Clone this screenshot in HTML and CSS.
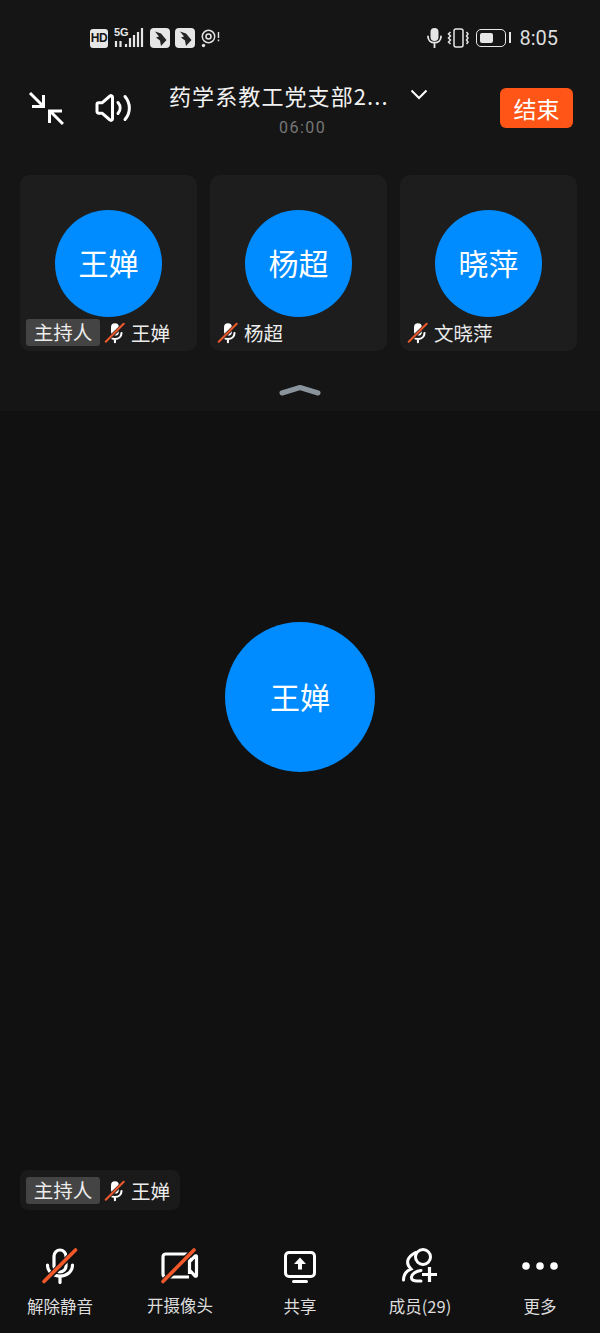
FILE: index.html
```html
<!DOCTYPE html>
<html lang="zh">

<head>
  <meta charset="utf-8">
  <title>会议</title>
  <link rel="stylesheet" href="styles.css">
</head>

<body>
  <svg class="defs" width="0" height="0">
    <symbol id="mutedMic" viewBox="0 0 24 24">
      <rect x="8" y="1.5" width="9" height="14" rx="4.5" fill="#fff" />
      <path d="M20 12.500c0 4.200-3.300 6.900-7.500 6.900-2 0-3.800-.6-5-1.700M12.500 19.500v3.500" fill="none" stroke="#fff" stroke-width="2.400" stroke-linecap="round" />
      <path d="M1.500 23 23 2" stroke="#1c1c1c" stroke-width="4" />
      <path d="M2 22.500 22.500 2" stroke="#e8582a" stroke-width="2.400" stroke-linecap="round" />
    </symbol>
    <symbol id="appBadge" viewBox="0 0 20 20">
      <rect width="20" height="20" rx="4" fill="#e6e6e6" />
      <path d="M5 3.500 11 5.500 16.500 12 11 18 10 12.500 6 9.500 9 8.500z" fill="#232323" />
    </symbol>
  </svg>

  <div class="phone">
    <section class="top">
      <div class="status">
        <div class="status-left">
          <span class="hd">HD</span>
          <div class="net">
            <span class="net-label">5G</span>
            <svg width="31" height="20" viewBox="0 0 31 20">
              <path d="M2 13v6M6.500 13v6M12 16v3M16 10v9M20 7v12M24 4v15M28 0v19" stroke="#e6e6e6" stroke-width="2.200" fill="none" />
            </svg>
          </div>
          <svg class="app-badge"><use href="#appBadge" /></svg>
          <svg class="app-badge"><use href="#appBadge" /></svg>
          <svg class="cast" width="20" height="20" viewBox="0 0 20 20">
            <circle cx="7.500" cy="8.500" r="6.200" fill="none" stroke="#e0e0e0" stroke-width="1.500" />
            <circle cx="7.500" cy="8.500" r="2.500" fill="none" stroke="#e0e0e0" stroke-width="1.600" />
            <circle cx="2.500" cy="17.500" r="1.700" fill="#e0e0e0" />
            <path d="M17.500 4v6M17.500 11.500v1.800" stroke="#e0e0e0" stroke-width="1.400" />
          </svg>
        </div>
        <div class="status-right">
          <svg class="status-mic" width="15" height="20" viewBox="0 0 15 20">
            <rect x="3.500" y="0" width="8" height="13" rx="4" fill="#e6e6e6" />
            <path d="M1 8.500c0 3.800 2.800 6.200 6.500 6.200s6.500-2.400 6.500-6.200M7.500 14.500V19.500" fill="none" stroke="#e6e6e6" stroke-width="1.800" stroke-linecap="round" />
          </svg>
          <svg width="22" height="20" viewBox="0 0 22 20">
            <rect x="7" y="1" width="9" height="18" rx="2" fill="none" stroke="#e6e6e6" stroke-width="1.500" />
            <path d="M3.500 4 1.500 6 3.500 8 1.500 10 3.500 12 1.500 14 3.500 16M19.500 4 21 6 19.500 8 21 10 19.500 12 21 14 19.500 16" fill="none" stroke="#e6e6e6" stroke-width="1.500" />
          </svg>
          <span class="battery"><span class="battery-fill"></span></span>
          <span class="clock">8:05</span>
        </div>
      </div>

      <header class="bar">
        <svg class="shrink" width="36" height="36" viewBox="0 0 36 36">
          <path d="M2 3 15.500 16.500M15.500 5v11.500H4M35 34 21.500 20.500M21.500 33V21H34" fill="none" stroke="#fff" stroke-width="3" />
        </svg>
        <svg class="speaker" width="37" height="30" viewBox="0 0 37 30">
          <path d="M2 11.500c0-1 .7-1.700 1.700-1.700H7L15 3c1-.9 2.500-.2 2.500 1.200v21.600c0 1.400-1.500 2.100-2.500 1.200L7 20.200H3.700c-1 0-1.700-.7-1.700-1.700z" fill="none" stroke="#fff" stroke-width="3" stroke-linejoin="round" />
          <path d="M23 9.500c2.800 3.300 2.800 7.700 0 11M30 3.500c5.800 6.800 5.800 16.200 0 23" fill="none" stroke="#fff" stroke-width="3" stroke-linecap="round" />
        </svg>
        <div class="title">
          <div class="title-line">
            <span class="title-text">药学系教工党支部2...</span>
            <svg width="18" height="11" viewBox="0 0 18 11">
              <path d="M1.500 1.500 9 9l7.500-7.500" fill="none" stroke="#fff" stroke-width="2" />
            </svg>
          </div>
          <div class="timer">06:00</div>
        </div>
        <button class="end">结束</button>
      </header>

      <div class="cards">
        <div class="card">
          <div class="avatar">王婵</div>
          <div class="label host-label">
            <span class="host">主持人</span>
            <svg class="mic"><use href="#mutedMic" /></svg>
            <span>王婵</span>
          </div>
        </div>
        <div class="card">
          <div class="avatar">杨超</div>
          <div class="label">
            <svg class="mic"><use href="#mutedMic" /></svg>
            <span>杨超</span>
          </div>
        </div>
        <div class="card">
          <div class="avatar">晓萍</div>
          <div class="label">
            <svg class="mic"><use href="#mutedMic" /></svg>
            <span>文晓萍</span>
          </div>
        </div>
      </div>

      <svg class="collapse" width="42" height="12" viewBox="0 0 42 12">
        <path d="M3 9 21 3.500 39 9" fill="none" stroke="#8a949c" stroke-width="5" stroke-linecap="round" stroke-linejoin="round" />
      </svg>
    </section>

    <main class="stage">
      <div class="speaker-avatar">王婵</div>
      <div class="speaker-tag">
        <span class="host">主持人</span>
        <svg class="mic"><use href="#mutedMic" /></svg>
        <span>王婵</span>
      </div>
    </main>

    <nav class="tools">
      <div class="tool">
        <svg width="36" height="36" viewBox="0 0 36 36">
          <rect x="12" y="2" width="12" height="22" rx="6" fill="none" stroke="#fff" stroke-width="3.200" />
          <path d="M5.500 17c0 6.500 5.500 11 12.500 11s12.500-4.500 12.500-11M18 28.500v6" fill="none" stroke="#fff" stroke-width="3.200" stroke-linecap="round" />
          <path d="M1 35 35 1" stroke="#111" stroke-width="6" />
          <path d="M2 33.500 33.500 2" stroke="#f0572a" stroke-width="3.600" stroke-linecap="round" />
        </svg>
        <span>解除静音</span>
      </div>
      <div class="tool tool-cam">
        <svg width="40" height="36" viewBox="0 0 40 36">
          <path d="M29 29H6c-2 0-3-1-3-3V9c0-2 1-3 3-3h21c2 0 2.500 1 2.500 3v17M29.500 14 35 8c.6-.5 1.500-.2 1.500.5v19c0 .7-.9 1-1.500.5L29.500 22" fill="none" stroke="#fff" stroke-width="3.200" stroke-linejoin="round" />
          <path d="M2 35 35 1" stroke="#111" stroke-width="6" />
          <path d="M3 33.500 34 2" stroke="#f0572a" stroke-width="3.600" stroke-linecap="round" />
        </svg>
        <span>开摄像头</span>
      </div>
      <div class="tool">
        <svg width="36" height="36" viewBox="0 0 36 36">
          <rect x="3.500" y="4.500" width="29" height="24" rx="3.500" fill="none" stroke="#fff" stroke-width="3" />
          <path d="M18 9.500 24 16H20V21.500H16V16H12z" fill="#fff" />
          <path d="M11.500 33.500H24.500" stroke="#fff" stroke-width="3" stroke-linecap="round" />
        </svg>
        <span>共享</span>
      </div>
      <div class="tool">
        <svg width="38" height="36" viewBox="0 0 38 36">
          <circle cx="22" cy="9" r="7.500" fill="none" stroke="#fff" stroke-width="3" />
          <path d="M14.500 4.500C8 8 3 14 10 21 5 23 2.500 27 2.500 32M20 22.500C15 23 11 26 10.500 29 10 32 13 33 16 33H20" fill="none" stroke="#fff" stroke-width="3" stroke-linecap="round" />
          <path d="M28.500 19V34M21 26.500H36" stroke="#fff" stroke-width="3.200" />
        </svg>
        <span>成员(29)</span>
      </div>
      <div class="tool">
        <svg width="38" height="36" viewBox="0 0 38 36">
          <circle cx="5" cy="18" r="3.800" fill="#fff" />
          <circle cx="19" cy="18" r="3.800" fill="#fff" />
          <circle cx="33" cy="18" r="3.800" fill="#fff" />
        </svg>
        <span>更多</span>
      </div>
    </nav>
  </div>
</body>

</html>
```

FILE: styles.css
```css
* {
  box-sizing: border-box;
}

body {
  margin: 0;
  background-color: #111111;
  color: #ffffff;
  font-family: "Noto Sans CJK SC", "Noto Sans", sans-serif;
}

.defs {
  position: absolute;
}

.phone {
  display: flex;
  flex-direction: column;
  width: 600px;
  height: 1333px;
  overflow: hidden;
}

.top {
  display: flex;
  flex-direction: column;
  align-items: center;
  height: 411px;
  background-color: #151515;
}

.status {
  display: flex;
  justify-content: space-between;
  align-items: center;
  width: 100%;
  height: 76px;
  padding: 0 42px 0 90px;
}

.status-left,
.status-right {
  display: flex;
  align-items: center;
}

.hd {
  width: 18px;
  height: 19px;
  border-radius: 3px;
  background-color: #e6e6e6;
  color: #151515;
  font-family: "Liberation Sans", sans-serif;
  font-size: 12px;
  font-weight: 700;
  line-height: 19px;
  letter-spacing: -0.5px;
  text-align: center;
}

.net {
  position: relative;
  width: 31px;
  height: 20px;
  margin-left: 6px;
}

.net-label {
  position: absolute;
  top: -3px;
  left: 0;
  font-family: "Liberation Sans Narrow", "Liberation Sans", sans-serif;
  font-size: 11px;
  font-weight: 700;
  line-height: 14px;
  color: #e6e6e6;
}

.app-badge {
  width: 20px;
  height: 20px;
  margin-left: 5px;
}

.cast {
  margin-left: 6px;
}

.status-right svg {
  margin-right: 7px;
}

.status-right .status-mic {
  margin-right: 5px;
}

.battery {
  position: relative;
  width: 30px;
  height: 18px;
  padding: 3px;
  border: 1.5px solid #e6e6e6;
  border-radius: 5px;
}

.battery::after {
  content: "";
  position: absolute;
  top: 2px;
  right: -6px;
  width: 2px;
  height: 11px;
  background-color: #e6e6e6;
}

.battery-fill {
  display: block;
  width: 13px;
  height: 100%;
  border-radius: 2px;
  background-color: #e6e6e6;
}

.clock {
  margin-left: 13px;
  font-family: "Roboto", sans-serif;
  font-size: 20px;
  color: #dddddd;
}

.bar {
  display: flex;
  align-items: center;
  width: 100%;
  height: 64px;
}

.shrink {
  margin-left: 28px;
}

.speaker {
  margin-left: 31px;
}

.title {
  margin-left: 37px;
  width: 331px;
}

.title-line {
  display: flex;
  align-items: center;
  gap: 21px;
  height: 30px;
}

.title-text {
  font-size: 22px;
  letter-spacing: 1.1px;
  color: #f2f2f2;
}

.timer {
  margin-top: 8px;
  padding-left: 110px;
  font-family: "Roboto", sans-serif;
  font-size: 16px;
  letter-spacing: 1.5px;
  color: #777777;
}

.end {
  width: 73px;
  height: 40px;
  padding: 0;
  border: 0;
  border-radius: 6px;
  background-color: #ff5516;
  color: #ffffff;
  font-family: inherit;
  font-size: 23px;
}

.cards {
  display: flex;
  gap: 13px;
  width: 100%;
  margin-top: 35px;
  padding-left: 20px;
}

.card {
  position: relative;
  display: flex;
  justify-content: center;
  width: 177px;
  height: 176px;
  padding-top: 35px;
  border-radius: 10px;
  background-color: #1d1d1d;
}

.avatar {
  display: flex;
  align-items: center;
  justify-content: center;
  width: 107px;
  height: 107px;
  padding-bottom: 3px;
  border-radius: 50%;
  background-color: #008cff;
  font-size: 30px;
}

.label {
  position: absolute;
  left: 7px;
  bottom: 6px;
  display: flex;
  align-items: center;
  height: 26px;
  font-size: 19.5px;
  color: #ececec;
}

.host-label {
  left: 6px;
}

.host {
  width: 74px;
  height: 27px;
  border-radius: 3px;
  background-color: #444444;
  font-size: 19.5px;
  line-height: 26px;
  text-align: center;
  color: #ececec;
}

.mic {
  flex: none;
  width: 21px;
  height: 23px;
  margin: 0 6px 0 4px;
}

.label .mic:first-child {
  margin-left: 0;
}

.collapse {
  margin-top: 33px;
}

.stage {
  flex: 1;
  display: flex;
  flex-direction: column;
  align-items: flex-start;
}

.speaker-avatar {
  display: flex;
  align-items: center;
  justify-content: center;
  width: 150px;
  height: 150px;
  padding-bottom: 2px;
  margin: 211px 0 0 225px;
  border-radius: 50%;
  background-color: #008cff;
  font-size: 30px;
}

.speaker-tag {
  display: flex;
  align-items: center;
  width: 160px;
  height: 40px;
  margin: auto 0 20px 20px;
  padding-left: 6px;
  border-radius: 8px;
  background-color: #1a1a1a;
  font-size: 19.5px;
  color: #ececec;
}

.tools {
  display: flex;
  height: 103px;
  padding-top: 18px;
}

.tool {
  display: flex;
  flex-direction: column;
  align-items: center;
  width: 120px;
  font-size: 16.5px;
  line-height: 24px;
  color: #dddddd;
}

.tool span {
  margin-top: 10px;
}

.tool-cam span {
  margin-top: 9px;
}
```
